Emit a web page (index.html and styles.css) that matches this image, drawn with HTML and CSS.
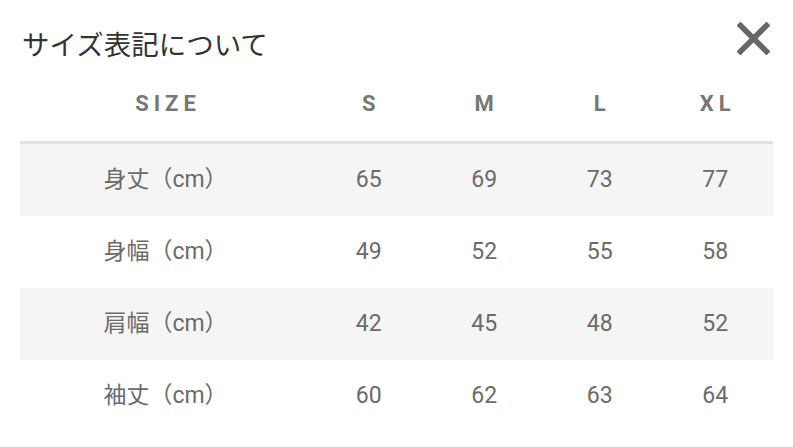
FILE: index.html
```html
<!DOCTYPE html>
<html lang="ja">
<head>
<meta charset="utf-8">
<link rel="stylesheet" href="styles.css">
</head>
<body>
<div class="modal">
  <div class="top">
    <h1 class="title">サイズ表記について</h1>
    <button class="close" aria-label="close">
      <svg width="33" height="33" viewBox="0 0 33 33"><path d="M3.5 3.5 L29.5 29.5 M29.5 3.5 L3.5 29.5" stroke="#666" stroke-width="5.5" stroke-linecap="square" fill="none"/></svg>
    </button>
  </div>
  <div class="table">
    <div class="row head-row">
      <div class="cell">SIZE</div><div class="cell">S</div><div class="cell">M</div><div class="cell">L</div><div class="cell">XL</div>
    </div>
    <div class="row odd">
      <div class="cell label">身丈（cm）</div><div class="cell">65</div><div class="cell">69</div><div class="cell">73</div><div class="cell">77</div>
    </div>
    <div class="row">
      <div class="cell label">身幅（cm）</div><div class="cell">49</div><div class="cell">52</div><div class="cell">55</div><div class="cell">58</div>
    </div>
    <div class="row odd">
      <div class="cell label">肩幅（cm）</div><div class="cell">42</div><div class="cell">45</div><div class="cell">48</div><div class="cell">52</div>
    </div>
    <div class="row">
      <div class="cell label">袖丈（cm）</div><div class="cell">60</div><div class="cell">62</div><div class="cell">63</div><div class="cell">64</div>
    </div>
  </div>
</div>
</body>
</html>
```
FILE: styles.css
```css
html, body {
  margin: 0;
  padding: 0;
  background: #fff;
}
.modal {
  width: 793px;
  height: 447px;
  box-sizing: border-box;
  padding: 0 20px;
  font-family: Roboto, "Noto Sans CJK JP", sans-serif;
}
.top {
  display: flex;
  justify-content: space-between;
  align-items: flex-start;
  padding: 26px 0 6px 2px;
}
.title {
  margin: 0;
  font-size: 27.5px;
  line-height: 34px;
  font-weight: 400;
  color: #333;
  font-family: "Noto Sans CJK JP", sans-serif;
}
.close {
  margin: -4px 3px 0 0;
  padding: 0;
  border: 0;
  background: none;
  width: 33px;
  height: 33px;
  display: block;
}
.close svg { display: block; }
.table {
  display: flex;
  flex-direction: column;
}
.row {
  display: grid;
  grid-template-columns: 291px repeat(4, 1fr);
  height: 72px;
  align-items: center;
  font-size: 23px;
  color: #6b6b6b;
}
.row.odd { background: #f5f5f5; }
.head-row {
  height: 78px;
  border-bottom: 3px solid #e3e3e3;
  font-size: 22px;
  font-weight: 700;
  letter-spacing: 5px;
  color: #777;
  align-items: start;
  padding-top: 25px;
  box-sizing: border-box;
}
.head-row .cell { padding-left: 5px; }
.cell {
  text-align: center;
  line-height: 26px;
}
```
